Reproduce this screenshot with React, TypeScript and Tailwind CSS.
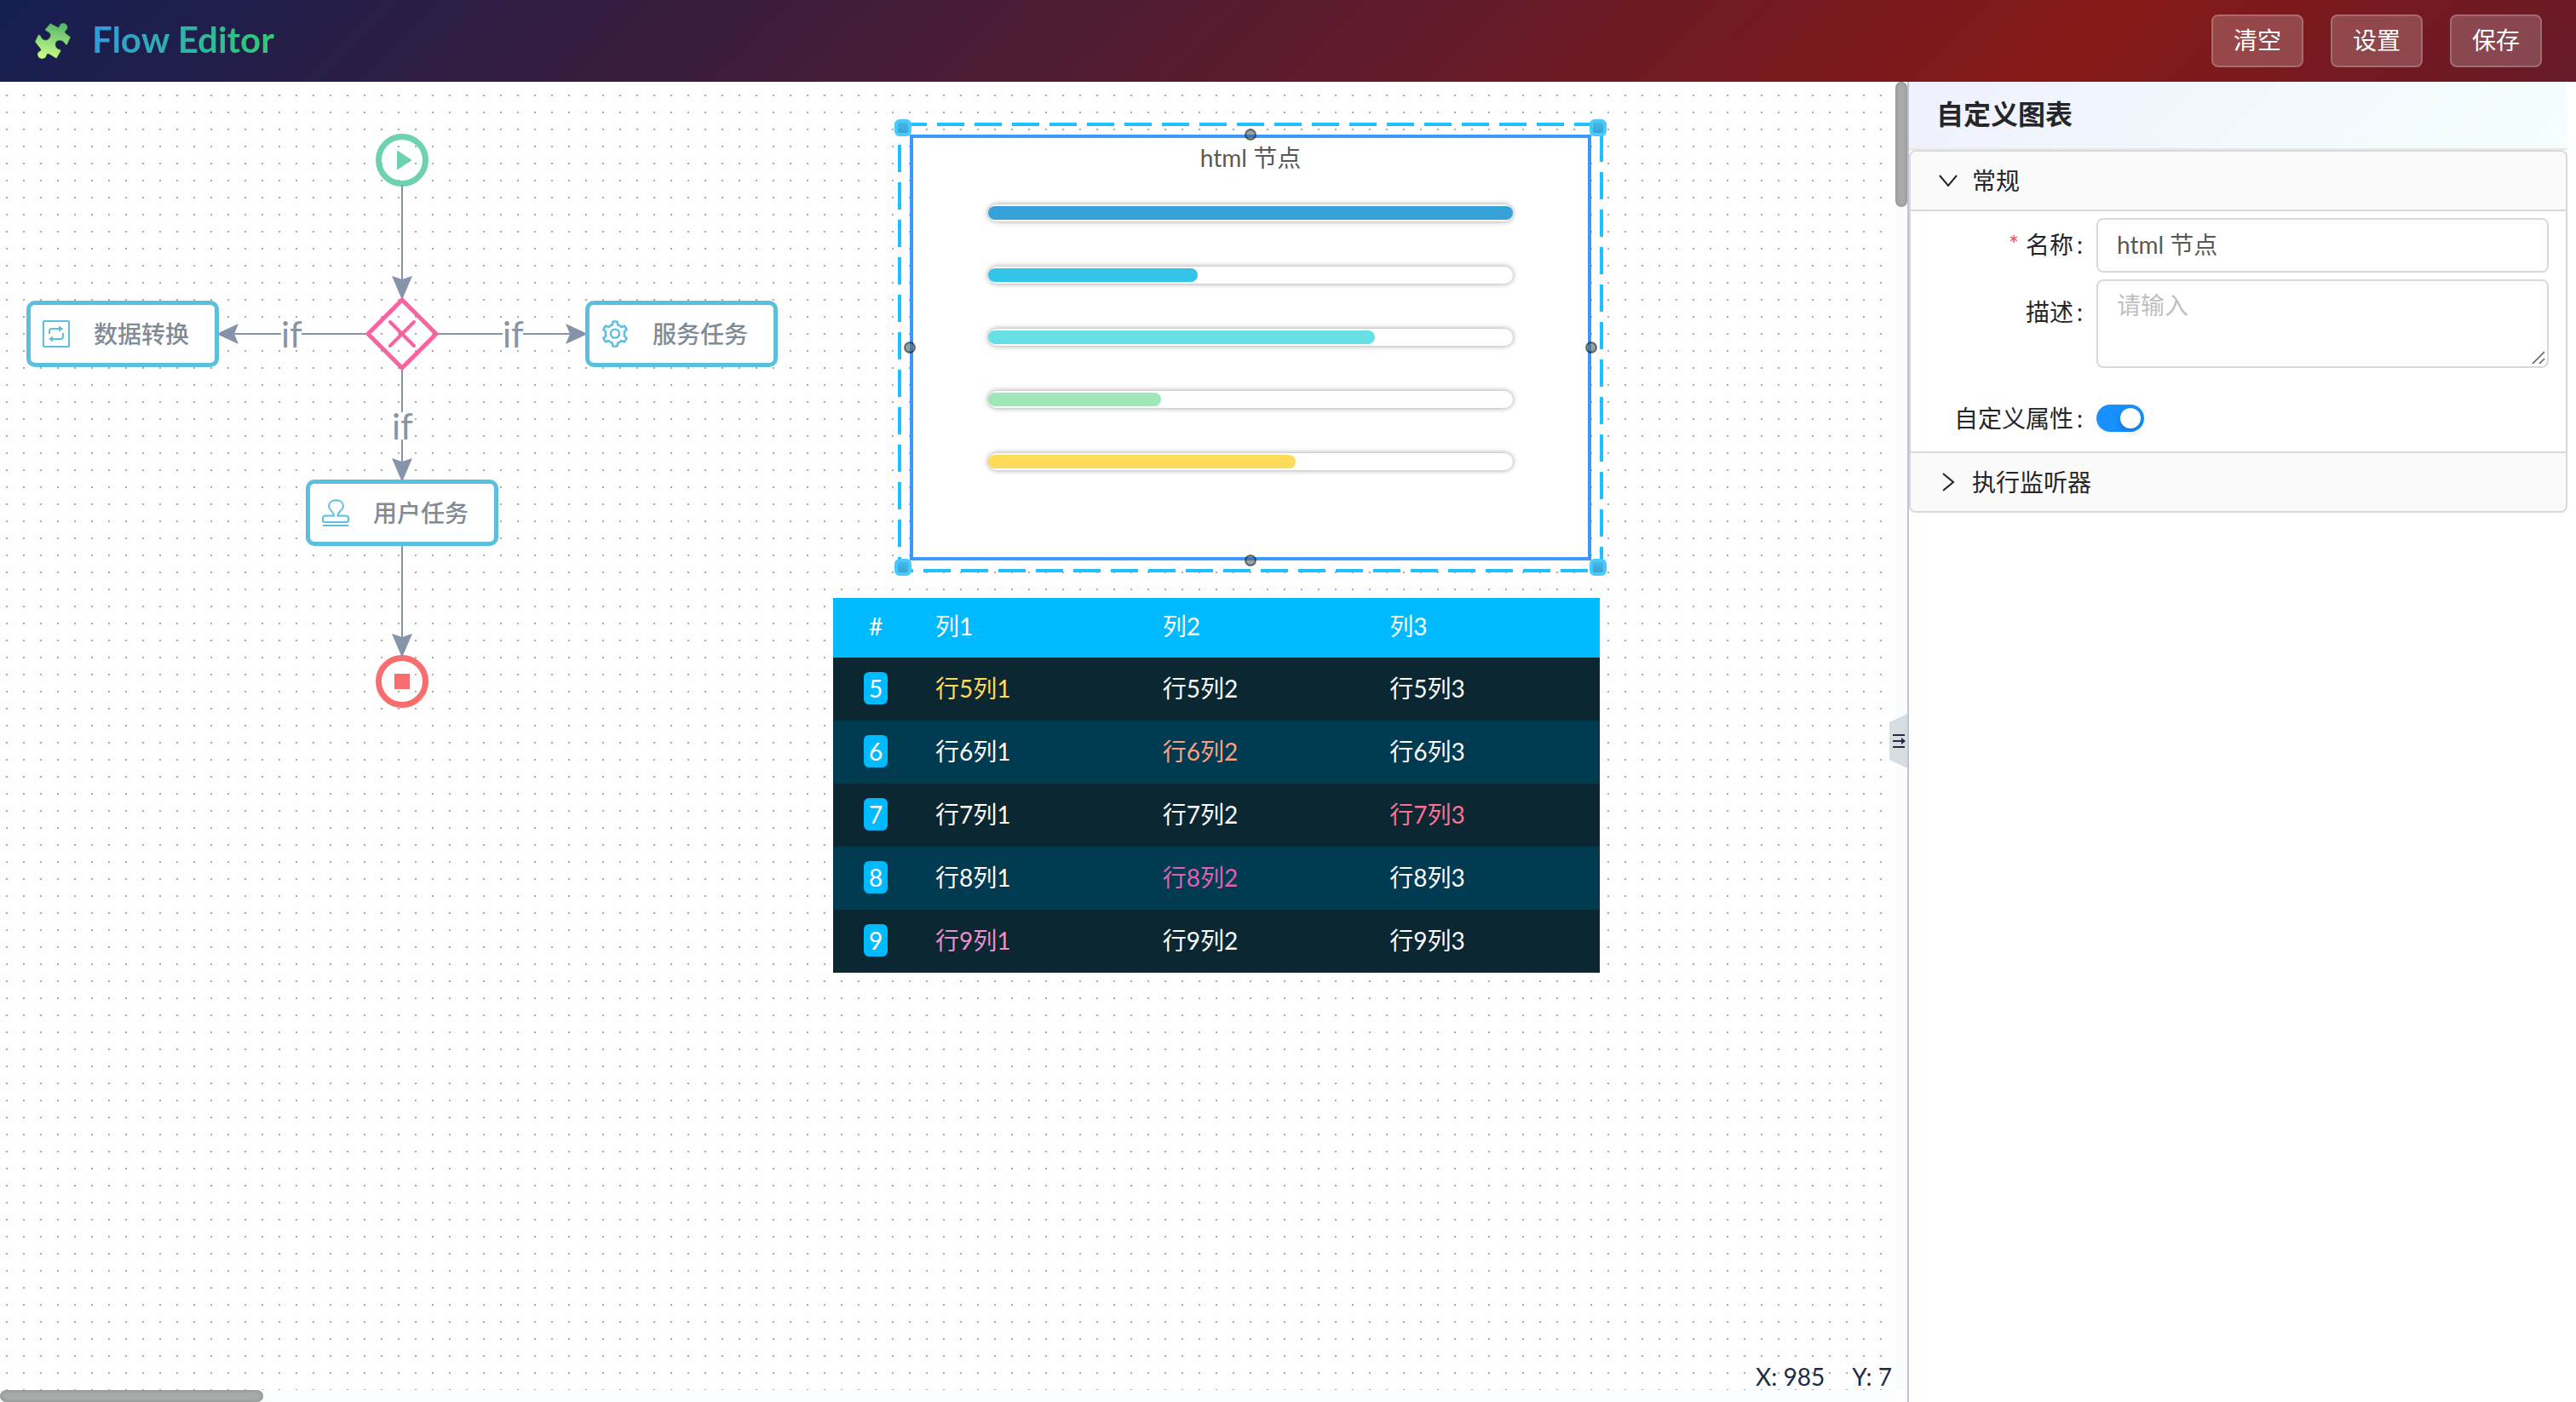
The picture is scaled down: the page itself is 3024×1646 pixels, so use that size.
import type { ReactNode } from "react";
import { AiOutlineSetting } from "react-icons/ai";

const DASHBOARD_BARS = [
  { label: "html 节点 1", value: 100, fill: "bg-[#37a2da]" },
  { label: "html 节点 2", value: 40, fill: "bg-[#32c5e9]" },
  { label: "html 节点 3", value: 73.7, fill: "bg-[#67e0e3]" },
  { label: "html 节点 4", value: 33, fill: "bg-[#9fe6b8]" },
  { label: "html 节点 5", value: 58.6, fill: "bg-[#ffdb5c]" },
];

const ROWS = [
  { id: 5, tint: ["text-[#ffdb5c]", "text-white", "text-white"] },
  { id: 6, tint: ["text-white", "text-[#ff9f7f]", "text-white"] },
  { id: 7, tint: ["text-white", "text-white", "text-[#fb7293]"] },
  { id: 8, tint: ["text-white", "text-[#e062ae]", "text-white"] },
  { id: 9, tint: ["text-[#e690d1]", "text-white", "text-white"] },
];

const EDGES = [
  { line: "M472 121V238", head: "M472 256L460 228L472 232L484 228Z" },
  { line: "M430 296H270", head: "M254 296L280 284L275 296L280 308Z" },
  { line: "M514 296H672", head: "M690 296L664 284L669 296L664 308Z" },
  { line: "M472 338V454", head: "M472 470L460 442L472 446L484 442Z" },
  { line: "M472 541V660", head: "M472 676L460 648L472 652L484 648Z" },
];

function PuzzleIcon() {
  return (
    <svg viewBox="30 42 132 134" className="h-11 w-11" aria-hidden="true">
      <defs>
        <linearGradient id="puzzle" x1="0.6" y1="0" x2="0.4" y2="1">
          <stop offset="0" stopColor="#56b56c" />
          <stop offset="1" stopColor="#c8ff86" />
        </linearGradient>
      </defs>
      <path
        fill="url(#puzzle)"
        stroke="#2c3a2e"
        strokeWidth="1.5"
        strokeLinejoin="round"
        d="M68 69L87 46L110 58C117 62 119 60 120 54C123 43 141 42 147 53C151 61 148 68 143 72C138 76 139 80 144 83L160 95L147 123C141 124 140 120 137 115C130 106 112 104 107 115C103 126 108 135 118 139C124 141 126 143 124 147L109 172L84 157C77 153 74 157 74 161C71 173 57 177 48 170C39 163 39 151 47 147C54 144 55 140 50 135L32 112L44 87C50 86 52 89 54 94C58 107 75 110 83 100C91 89 87 79 77 76C72 74 69 73 68 69Z"
      />
    </svg>
  );
}

function SwapIcon() {
  return (
    <svg viewBox="0 0 32 32" className="h-8 w-8" fill="none" stroke="#5bc0de" strokeWidth="2" aria-hidden="true">
      <rect x="1" y="1" width="30" height="30" rx="1" />
      <path d="M8 16V13Q8 10 11 10H20M24 15V19Q24 22 21 22H12" />
      <path d="M19 6.500L24.500 10L19 13.500ZM12 18.500L7 22L12 25.500Z" fill="#5bc0de" stroke="none" />
    </svg>
  );
}

function StampIcon() {
  return (
    <svg viewBox="0 0 32 32" className="h-8 w-8" fill="none" stroke="#5bc0de" strokeWidth="2" aria-hidden="true">
      <path d="M14 19.500C14 14 8 13 8 8.500C8 4 11.500 1.200 16.500 1.200C21.500 1.200 25 4 25 8.500C25 13 18.500 14 18.500 19.500H28Q31 19.500 31 22.500V25Q31 27 29 27H3Q1 27 1 25V22.500Q1 19.500 4 19.500Z" />
      <path d="M1 31H31" />
    </svg>
  );
}

function TaskNode({ place, icon, label }: { place: string; icon: ReactNode; label: string }) {
  return (
    <div
      className={`absolute flex h-[78px] w-[226px] items-center rounded-[10px] border-[5px] border-[#5bc0de] bg-white pl-3.5 text-[28px] font-medium text-[#808b96] ${place}`}
    >
      {icon}
      <span className="ml-7">{label}</span>
    </div>
  );
}

function EdgeLabel({ place }: { place: string }) {
  return (
    <span className={`absolute flex h-8 w-6 items-center bg-white text-[42px] leading-8 text-[#8694a9] ${place}`}>
      if
    </span>
  );
}

function FlowShapes() {
  return (
    <svg className="absolute top-0 left-0 h-[760px] w-[980px]" fill="none" aria-hidden="true">
      <circle cx="472" cy="92" r="27.500" stroke="#6ed1b1" strokeWidth="7" />
      <path d="M467 82L482 92L467 102Z" fill="#6ed1b1" stroke="#6ed1b1" strokeWidth="2" strokeLinejoin="round" />
      <circle cx="472" cy="704" r="27.500" stroke="#f86d6d" strokeWidth="7" />
      <rect x="463" y="695" width="18" height="18" fill="#f86d6d" />
      {EDGES.map((edge) => (
        <g key={edge.line}>
          <path d={edge.line} stroke="#8694a9" strokeWidth="2" />
          <path d={edge.head} fill="#8694a9" />
        </g>
      ))}
      <path d="M472 256L512 296L472 336L432 296Z" stroke="#f8629f" strokeWidth="5" strokeLinejoin="round" />
      <path d="M458 282L486 310M486 282L458 310" stroke="#f8629f" strokeWidth="4" strokeLinecap="round" />
    </svg>
  );
}

function HtmlNode() {
  return (
    <section className="absolute top-[62px] left-[1068px] h-[500px] w-[800px] border-4 border-[#3b99fb] bg-white px-[88px]">
      <h2 className="h-[52px] text-center text-[28px] leading-[46px] text-[#595959]">html 节点</h2>
      <div className="flex flex-col gap-[53px] pt-[26px]">
        {DASHBOARD_BARS.map((bar) => (
          <div
            key={bar.label}
            role="progressbar"
            aria-label={bar.label}
            aria-valuenow={bar.value}
            className="flex h-5 items-center rounded-full shadow-[0_0_6px_rgba(0,0,0,0.4)]"
          >
            <div className={`h-4 rounded-full ${bar.fill}`} style={{ width: `${bar.value}%` }} />
          </div>
        ))}
      </div>
    </section>
  );
}

function SelectionFrame() {
  const corners = [
    [1050, 44],
    [1866, 44],
    [1050, 560],
    [1866, 560],
  ];
  const anchors = [
    [1468, 62],
    [1068, 312],
    [1868, 312],
    [1468, 562],
  ];
  return (
    <svg className="absolute top-0 left-0 h-[600px] w-[1900px]" fill="none" aria-hidden="true">
      <defs>
        <linearGradient id="handle" x1="0" y1="0" x2="0" y2="1">
          <stop offset="0" stopColor="#42b9ea" />
          <stop offset="1" stopColor="#3ba3d0" />
        </linearGradient>
      </defs>
      <rect x="1056" y="50" width="824" height="524" stroke="#1ec1ff" strokeWidth="4" strokeDasharray="32 12" />
      {anchors.map(([x, y]) => (
        <circle key={`${x}-${y}`} cx={x} cy={y} r="6" fill="rgba(77,100,113,0.6)" stroke="rgba(0,0,0,0.5)" strokeWidth="2" />
      ))}
      {corners.map(([x, y]) => (
        <g key={`${x}-${y}`}>
          <rect x={x} y={y} width="20" height="20" rx="6" fill="#48caff" />
          <rect x={x + 4} y={y + 4} width="12" height="12" rx="2" fill="url(#handle)" />
        </g>
      ))}
    </svg>
  );
}

function ScrollTable() {
  return (
    <table className="absolute top-[606px] left-[978px] w-[900px] table-fixed border-collapse text-left text-[28px] leading-[38px] text-white">
      <thead>
        <tr className="h-[70px] bg-[#00baff]">
          <th scope="col" className="w-[100px] pb-1 text-center font-normal">#</th>
          <th scope="col" className="pb-1 pl-5 font-normal">列1</th>
          <th scope="col" className="pb-1 pl-5 font-normal">列2</th>
          <th scope="col" className="pb-1 pl-5 font-normal">列3</th>
        </tr>
      </thead>
      <tbody>
        {ROWS.map((row) => (
          <tr key={row.id} className="h-[74px] odd:bg-[#0a2732] even:bg-[#003b51]">
            <td className="pb-0.5 text-center">
              <span className="inline-block w-7 rounded-md bg-[#00baff]">{row.id}</span>
            </td>
            {row.tint.map((tint, i) => (
              <td key={i} className={`pb-0.5 pl-5 ${tint}`}>{`行${row.id}列${i + 1}`}</td>
            ))}
          </tr>
        ))}
      </tbody>
    </table>
  );
}

function Canvas() {
  return (
    <section className="relative grid min-w-0 flex-1 grid-cols-[1fr_14px] grid-rows-[1fr_14px] overflow-hidden">
      <div className="relative overflow-hidden bg-[conic-gradient(at_2px_2px,transparent_75%,#ababab_0)] bg-[size:20px_20px] bg-[position:7px_15px]">
        <FlowShapes />
        <TaskNode place="top-[257px] left-[31px]" icon={<SwapIcon />} label="数据转换" />
        <TaskNode
          place="top-[257px] left-[687px]"
          icon={<AiOutlineSetting className="h-9 w-9 -mx-0.5 text-[#5bc0de]" aria-hidden="true" />}
          label="服务任务"
        />
        <TaskNode place="top-[467px] left-[359px]" icon={<StampIcon />} label="用户任务" />
        <EdgeLabel place="top-[280px] left-[330px]" />
        <EdgeLabel place="top-[280px] left-[590px]" />
        <EdgeLabel place="top-[388px] left-[460px]" />
        <HtmlNode />
        <SelectionFrame />
        <ScrollTable />
        <p className="absolute right-1 bottom-0 flex gap-8 text-[28px] leading-8 text-[#1f2a44]">
          <span>X: 985</span>
          <span>Y: 7</span>
        </p>
      </div>
      <div className="bg-[#f9fdff]">
        <div className="h-[147px] rounded-[7px] bg-[#a9abaa] shadow-[inset_0_0_5px_rgba(0,0,0,0.2)]" />
      </div>
      <div className="bg-[#f9fdff]">
        <div className="h-full w-[309px] rounded-[7px] bg-[#a9abaa] shadow-[inset_0_0_5px_rgba(0,0,0,0.2)]" />
      </div>
      <button type="button" aria-label="收起面板" className="absolute top-[742px] right-0 h-16 w-[22px]">
        <svg viewBox="0 0 22 64" className="h-16 w-[22px]" aria-hidden="true">
          <path d="M22 0V64L1 54V10Z" fill="#d7dce0" />
          <path d="M5 25H19M5 32H15M5 39H19" stroke="#1f2a44" strokeWidth="2" />
          <path d="M15 28L20 32L15 36Z" fill="#1f2a44" />
        </svg>
      </button>
    </section>
  );
}

function Chevron({ d }: { d: string }) {
  return (
    <svg viewBox="0 0 24 24" className="h-6 w-6" fill="none" stroke="#262626" strokeWidth="2" aria-hidden="true">
      <path d={d} />
    </svg>
  );
}

function PropertyPanel() {
  const sectionButton = "flex w-full items-center gap-4 bg-[#fafafa] pl-8 text-left";
  const rowLabel = "w-[202px] shrink-0 text-right";
  return (
    <aside className="w-[785px] shrink-0 border-l-2 border-[#bfc3cf] bg-white pr-2.5 text-[28px] text-[#262626]">
      <h1 className="h-20 border-b-2 border-[#e8e8e8] bg-[linear-gradient(135deg,#eff1fd,#f5fffe)] pl-8 text-[32px] leading-[76px] font-bold">
        自定义图表
      </h1>
      <div className="overflow-hidden rounded-lg border-2 border-[#d9d9d9]">
        <button type="button" aria-expanded="true" className={`${sectionButton} h-[68px]`}>
          <Chevron d="M2 6L12 18L22 6" />
          常规
        </button>
        <form className="flex flex-col gap-2 border-y-2 border-[#d9d9d9] pt-2 pr-5 pb-[18px]">
          <div className="flex items-center gap-4">
            <label htmlFor="node-name" className={`${rowLabel} pb-0.5`}>
              <span className="mr-2 text-[#ff4d4f]">*</span>
              名称<span className="ml-1">:</span>
            </label>
            <input
              id="node-name"
              required
              defaultValue="html 节点"
              className="h-16 min-w-0 flex-1 rounded-lg border-2 border-[#d9d9d9] px-[22px] pb-1 text-[#595959]"
            />
          </div>
          <div className="flex gap-4">
            <label htmlFor="node-desc" className={`${rowLabel} leading-[76px]`}>
              描述<span className="ml-1">:</span>
            </label>
            <div className="relative flex min-w-0 flex-1">
              <textarea
                id="node-desc"
                placeholder="请输入"
                className="h-[104px] w-full resize-none rounded-lg border-2 border-[#d9d9d9] px-[22px] py-1.5 leading-[44px] placeholder:text-[#bfbfbf]"
              />
              <svg viewBox="0 0 16 16" className="absolute right-1 bottom-1 h-4 w-4" stroke="#595959" strokeWidth="1.500" aria-hidden="true">
                <path d="M1 15L15 1M9 15L15 9" />
              </svg>
            </div>
          </div>
          <div className="flex items-center gap-4 pt-[30px]">
            <label htmlFor="custom-attrs" className={rowLabel}>
              自定义属性<span className="ml-1">:</span>
            </label>
            <input
              id="custom-attrs"
              type="checkbox"
              role="switch"
              defaultChecked
              className="h-8 w-14 appearance-none rounded-full bg-gray-400 px-1 py-1 before:block before:h-6 before:w-6 before:rounded-full before:bg-white before:shadow-[0_4px_8px_rgba(0,35,11,0.2)] checked:bg-[#1890ff] checked:before:ml-6"
            />
          </div>
        </form>
        <button type="button" aria-expanded="false" className={`${sectionButton} h-[68px]`}>
          <Chevron d="M6 2L18 12L6 22" />
          执行监听器
        </button>
      </div>
    </aside>
  );
}

export default function App() {
  return (
    <div className="flex h-screen flex-col overflow-hidden bg-white font-[Lato,'Noto_Sans_CJK_SC',sans-serif]">
      <header className="flex h-24 shrink-0 items-center justify-between bg-[linear-gradient(135deg,#131f51_0%,#861917_80%,#661a28_100%)] px-10">
        <div className="flex items-center gap-6">
          <PuzzleIcon />
          <span className="bg-[linear-gradient(90deg,#3498db,#2ecc71)] bg-clip-text pb-1 text-[42px] leading-[52px] font-bold text-transparent">
            Flow Editor
          </span>
        </div>
        <nav className="flex gap-8">
          {["清空", "设置", "保存"].map((label) => (
            <button
              key={label}
              type="button"
              className="h-[62px] w-[108px] rounded-lg border-2 border-white/20 bg-white/20 pb-0.5 text-[28px] text-white"
            >
              {label}
            </button>
          ))}
        </nav>
      </header>
      <main className="flex min-h-0 flex-1">
        <Canvas />
        <PropertyPanel />
      </main>
    </div>
  );
}
